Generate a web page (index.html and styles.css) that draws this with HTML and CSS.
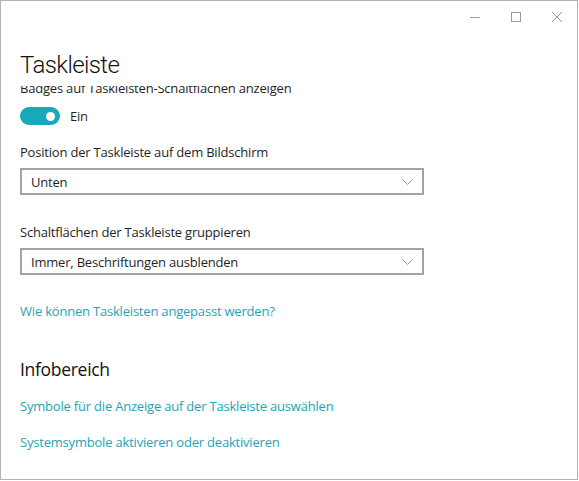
FILE: index.html
```html
<!DOCTYPE html>
<html lang="de">
<head>
<meta charset="utf-8">
<title>Taskleiste</title>
<link rel="stylesheet" href="styles.css">
</head>
<body>
<div class="window">
  <div class="titlebar">
    <div class="tb-btn"><svg width="10" height="10" viewBox="0 0 10 10"><line x1="0" y1="5.5" x2="10" y2="5.5" /></svg></div>
    <div class="tb-btn"><svg width="10" height="10" viewBox="0 0 10 10"><rect x="0.5" y="0.5" width="9" height="9" /></svg></div>
    <div class="tb-btn"><svg width="10" height="10" viewBox="0 0 10 10"><line x1="0" y1="0" x2="10" y2="10" /><line x1="10" y1="0" x2="0" y2="10" /></svg></div>
  </div>
  <div class="header">
    <h1 class="title">Taskleiste</h1>
  </div>
  <div class="scroll">
    <div class="scroll-inner">
      <div class="label first">Badges auf Taskleisten-Schaltflächen anzeigen</div>
      <div class="toggle-row">
        <span class="toggle"><span class="knob"></span></span>
        <span class="toggle-text">Ein</span>
      </div>
      <div class="label lbl-pos">Position der Taskleiste auf dem Bildschirm</div>
      <div class="select">
        <span class="select-text">Unten</span>
        <svg class="chev" width="11" height="6" viewBox="0 0 11 6"><polyline points="0.5,0.5 5.5,5.5 10.5,0.5" /></svg>
      </div>
      <div class="label lbl-group">Schaltflächen der Taskleiste gruppieren</div>
      <div class="select">
        <span class="select-text">Immer, Beschriftungen ausblenden</span>
        <svg class="chev" width="11" height="6" viewBox="0 0 11 6"><polyline points="0.5,0.5 5.5,5.5 10.5,0.5" /></svg>
      </div>
      <a class="link link-help" href="#">Wie können Taskleisten angepasst werden?</a>
      <h2 class="subtitle">Infobereich</h2>
      <a class="link link-sym" href="#">Symbole für die Anzeige auf der Taskleiste auswählen</a>
      <a class="link link-sys" href="#">Systemsymbole aktivieren oder deaktivieren</a>
    </div>
  </div>
</div>
</body>
</html>
```
FILE: styles.css
```css
* { box-sizing: border-box; }
html, body { margin: 0; padding: 0; background: #ffffff; }
body {
  font-family: "Open Sans", "Noto Sans", "Liberation Sans", sans-serif;
  font-size: 13px;
  letter-spacing: -0.2px;
  color: #1f1f1f;
}
.window {
  width: 578px;
  height: 480px;
  border: 1px solid #b3b3b3;
  background: #fff;
  display: flex;
  flex-direction: column;
  overflow: hidden;
}
.titlebar {
  height: 32px;
  display: flex;
  justify-content: flex-end;
  flex: none;
}
.tb-btn {
  width: 41px;
  height: 32px;
  display: flex;
  align-items: center;
  justify-content: center;
}
.tb-btn svg { stroke: #9a9a9a; stroke-width: 1; fill: none; }
.header {
  flex: none;
  height: 53px;
  padding-left: 19px;
}
.title {
  margin: 0;
  font-family: "Roboto", "Open Sans", sans-serif;
  font-weight: 300;
  font-size: 24px;
  letter-spacing: -0.6px;
  line-height: 34px;
  padding-top: 15px;
  color: #111;
}
.scroll {
  flex: 1;
  overflow: hidden;
  padding: 0 19px;
}
.scroll-inner { display: flex; flex-direction: column; align-items: flex-start; }
.label { line-height: 20px; }
.label.first { margin-top: -8px; }
.toggle-row {
  display: flex;
  align-items: center;
  gap: 10px;
  margin-top: 8px;
  height: 20px;
}
.toggle {
  width: 40px;
  height: 18px;
  border-radius: 9px;
  background: #17a9ba;
  display: flex;
  align-items: center;
  justify-content: flex-end;
  padding-right: 5px;
}
.knob { width: 9px; height: 9px; border-radius: 50%; background: #fff; }
.lbl-pos { margin-top: 16px; }
.select {
  margin-top: 6px;
  width: 404px;
  height: 27px;
  border: 2px solid #a3a3a3;
  display: flex;
  align-items: center;
  justify-content: space-between;
  padding: 0 9px 0 9px;
}
.chev { stroke: #999; stroke-width: 1; fill: none; }
.lbl-group { margin-top: 27px; }
.link {
  color: #1fa3b6;
  text-decoration: none;
  line-height: 20px;
}
.link-help { margin-top: 26px; }
.subtitle {
  margin: 36px 0 0 0;
  font-weight: 400;
  font-size: 17.5px;
  letter-spacing: -0.3px;
  line-height: 24px;
  color: #111;
}
.link-sym { margin-top: 15px; }
.link-sys { margin-top: 16px; }
```
